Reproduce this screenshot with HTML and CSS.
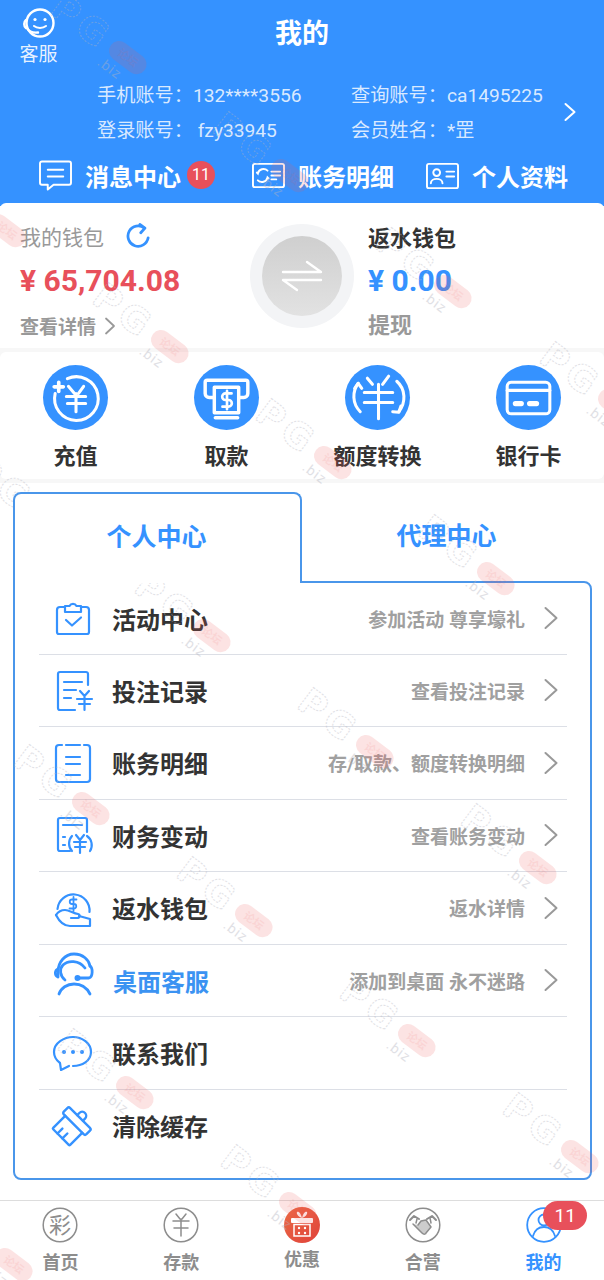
FILE: index.html
```html
<!DOCTYPE html>
<html lang="zh-CN">
<head>
<meta charset="utf-8">
<title>我的</title>
<link rel="stylesheet" href="styles.css">
</head>
<body>
<div class="page">
  <header class="header">
    <div class="top">
      <div class="service">
        <svg class="service-icon" viewBox="0 0 34 32" fill="none" stroke="#fff" stroke-width="2.4" stroke-linecap="round">
          <circle cx="18" cy="15" r="13.5"/>
          <circle cx="13" cy="11.5" r="1.6" fill="#fff" stroke="none"/>
          <circle cx="23" cy="11.5" r="1.6" fill="#fff" stroke="none"/>
          <path d="M4 12c-2.400 2-2.400 6 0 8"/>
          <path d="M5 20c2 4 6 5 11 4.500"/>
          <path d="M12 18c3 2.500 9 2.500 12 0" stroke-width="2"/>
        </svg>
        <span class="service-label">客服</span>
      </div>
      <h1 class="title">我的</h1>
    </div>
    <div class="account">
      <div class="account-grid">
        <span>手机账号：132****3556</span>
        <span>查询账号：ca1495225</span>
        <span>登录账号： fzy33945</span>
        <span>会员姓名：*罡</span>
      </div>
      <svg class="account-arrow" viewBox="0 0 14 20" fill="none" stroke="#fff" stroke-width="2" stroke-linecap="round" stroke-linejoin="round"><path d="M2.500 2l9 8-9 8"/></svg>
    </div>
    <nav class="actions">
      <div class="action">
        <svg class="action-icon" viewBox="0 0 34 32" fill="none" stroke="#fff" stroke-width="2" stroke-linejoin="round" stroke-linecap="round">
          <path d="M3 1.500h28a2 2 0 0 1 2 2v20a2 2 0 0 1-2 2H15l-6 5v-5H3a2 2 0 0 1-2-2v-20a2 2 0 0 1 2-2z"/>
          <path d="M9 10h16M9 17h16"/>
        </svg>
        <span>消息中心</span>
        <span class="msg-badge">11</span>
      </div>
      <div class="action">
        <svg class="action-icon" viewBox="0 0 34 28" fill="none" stroke="#fff" stroke-width="2" stroke-linecap="round">
          <rect x="1" y="2" width="32" height="24" rx="2"/>
          <path d="M16 9a6 6 0 0 0-10 3l-1-1M6 19a6 6 0 0 0 10-3l1 1"/>
          <path d="M20 10h9M20 14h9M20 18h5"/>
        </svg>
        <span>账务明细</span>
      </div>
      <div class="action">
        <svg class="action-icon" viewBox="0 0 34 28" fill="none" stroke="#fff" stroke-width="2" stroke-linecap="round">
          <rect x="1" y="2" width="32" height="25" rx="2"/>
          <circle cx="11" cy="11" r="3.500"/>
          <path d="M5 22c0-6 12-6 12 0M21 10h8M21 15h8"/>
        </svg>
        <span>个人资料</span>
      </div>
    </nav>
  </header>

  <section class="wallet">
    <div class="wallet-col wallet-main">
      <div class="wallet-name">我的钱包
        <svg class="refresh" viewBox="0 0 26 28" fill="none" stroke="#3592ff" stroke-width="3" stroke-linecap="round" stroke-linejoin="round">
          <path d="M20 5.500A11 11 0 1 0 24 16"/><path d="M15 1.500l5.500 4-4.500 5"/>
        </svg>
      </div>
      <div class="amount amount-red">¥ 65,704.08</div>
      <div class="wallet-link">查看详情
        <svg class="link-arrow" viewBox="0 0 12 18" fill="none" stroke="#999" stroke-width="1.800" stroke-linecap="round" stroke-linejoin="round"><path d="M2 1.500l8 7.500-8 7.500"/></svg>
      </div>
    </div>
    <div class="swap">
      <div class="swap-inner">
        <svg viewBox="0 0 42 34" fill="none" stroke="#fff" stroke-width="2.400" stroke-linecap="round" stroke-linejoin="round">
          <path d="M2 13h38L26 3"/><path d="M40 21H2l14 10"/>
        </svg>
      </div>
    </div>
    <div class="wallet-col wallet-back">
      <div class="wallet-name wallet-name-dark">返水钱包</div>
      <div class="amount amount-blue">¥ 0.00</div>
      <div class="wallet-withdraw">提现</div>
    </div>
  </section>

  <section class="shortcuts">
    <div class="shortcut">
      <div class="shortcut-icon">
        <svg viewBox="0 0 64 64" fill="none" stroke="#fff" stroke-width="3" stroke-linecap="round" stroke-linejoin="round">
          <path d="M12 28A21.500 21.500 0 1 0 24 13.500"/>
          <path d="M15.500 17v9M11 21.500h9" stroke-width="3.600"/>
          <path d="M25 21l6 7M40 21l-5 7M23 31h19M24 38h18M32.500 28v18"/>
        </svg>
      </div>
      <span>充值</span>
    </div>
    <div class="shortcut">
      <div class="shortcut-icon">
        <svg viewBox="0 0 64 64" fill="none" stroke="#fff" stroke-width="3.400" stroke-linecap="round" stroke-linejoin="round">
          <path d="M19 32h-4a4 4 0 0 1-4-4V17a2 2 0 0 1 2-2h38a2 2 0 0 1 2 2v11a4 4 0 0 1-4 4h-4"/>
          <path d="M20 22h24v25H20z"/>
          <path d="M37 28h-6a2.500 2.500 0 0 0 0 6.500h3a2.500 2.500 0 0 1 0 6.500h-6M32.500 25.500v18" stroke-width="2.600"/>
          <path d="M21 52h22"/>
        </svg>
      </div>
      <span>取款</span>
    </div>
    <div class="shortcut">
      <div class="shortcut-icon">
        <svg viewBox="0 0 64 64" fill="none" stroke="#fff" stroke-width="3" stroke-linecap="round" stroke-linejoin="round">
          <path d="M13 18c-6 8-6 20 2 28"/><path d="M9.500 23l3.500-5 3.500 5"/>
          <path d="M51 16c9 8 9 21 2 30"/><path d="M47 46l6 0.500 2-6"/>
          <path d="M22 13l5 6M43 11l-6 8M19 27h28M19 37h28M33 19v34"/>
        </svg>
      </div>
      <span>额度转换</span>
    </div>
    <div class="shortcut">
      <div class="shortcut-icon">
        <svg viewBox="0 0 64 64" fill="none" stroke="#fff" stroke-width="3" stroke-linecap="round" stroke-linejoin="round">
          <rect x="11" y="17" width="42" height="31" rx="4"/>
          <path d="M11 25h42"/>
          <path d="M19 38h6M33 38h7" stroke-width="5"/>
        </svg>
      </div>
      <span>银行卡</span>
    </div>
  </section>

  <section class="center">
    <div class="tabs">
      <div class="tab tab-on">个人中心</div>
      <div class="tab">代理中心</div>
    </div>
    <div class="panel">
      <div class="row">
        <svg class="row-icon" viewBox="0 0 40 40" fill="none" stroke="#3592ff" stroke-width="2.200" stroke-linecap="round" stroke-linejoin="round">
          <path d="M12 9H7a3 3 0 0 0-3 3v22a2 2 0 0 0 2 2h28a2 2 0 0 0 2-2V12a3 3 0 0 0-3-3h-5"/>
          <path d="M12 14V8h4.500a4 4 0 0 1 7 0H28v6z"/>
          <path d="M13 22l6 5.500 9-8"/>
        </svg>
        <span class="row-name">活动中心</span>
        <span class="row-hint">参加活动 尊享壕礼</span>
        <svg class="row-arrow" viewBox="0 0 16 24" fill="none" stroke="#999" stroke-width="2" stroke-linecap="round" stroke-linejoin="round"><path d="M2.500 2l11 10-11 10"/></svg>
      </div>
      <div class="row">
        <svg class="row-icon" viewBox="0 0 40 40" fill="none" stroke="#3592ff" stroke-width="2.200" stroke-linecap="round" stroke-linejoin="round">
          <path d="M35 15V4a2 2 0 0 0-2-2H7a2 2 0 0 0-2 2v34a2 2 0 0 0 2 2h15"/>
          <path d="M11 12h18M11 20h12M11 28h7"/>
          <path d="M27 21l4.500 5 4.500-5M24 29h15M26 34h11M31.500 26v14"/>
        </svg>
        <span class="row-name">投注记录</span>
        <span class="row-hint">查看投注记录</span>
        <svg class="row-arrow" viewBox="0 0 16 24" fill="none" stroke="#999" stroke-width="2" stroke-linecap="round" stroke-linejoin="round"><path d="M2.500 2l11 10-11 10"/></svg>
      </div>
      <div class="row">
        <svg class="row-icon" viewBox="0 0 40 40" fill="none" stroke="#3592ff" stroke-width="2.200" stroke-linecap="round" stroke-linejoin="round">
          <path d="M9 2H6a3 3 0 0 0-3 3v31a3 3 0 0 0 3 3h28a3 3 0 0 0 3-3V5a3 3 0 0 0-3-3h-3"/>
          <path d="M13 2h14M13 14h14M13 21h14M13 32h14"/>
        </svg>
        <span class="row-name">账务明细</span>
        <span class="row-hint">存/取款、额度转换明细</span>
        <svg class="row-arrow" viewBox="0 0 16 24" fill="none" stroke="#999" stroke-width="2" stroke-linecap="round" stroke-linejoin="round"><path d="M2.500 2l11 10-11 10"/></svg>
      </div>
      <div class="row">
        <svg class="row-icon" viewBox="0 0 40 40" fill="none" stroke="#3592ff" stroke-width="2.200" stroke-linecap="round" stroke-linejoin="round">
          <path d="M34 17V5a2 2 0 0 0-2-2H7a2 2 0 0 0-2 2v29a2 2 0 0 0 2 2h10"/>
          <path d="M10 10h19M10 22h2M10 30h2"/>
          <path d="M19 21a11 11 0 0 0 0 15M34 21a11 11 0 0 1 3 15"/>
          <path d="M23 20l4 5 4-5M21 27h12M22 32h10M27 25v13"/>
        </svg>
        <span class="row-name">财务变动</span>
        <span class="row-hint">查看账务变动</span>
        <svg class="row-arrow" viewBox="0 0 16 24" fill="none" stroke="#999" stroke-width="2" stroke-linecap="round" stroke-linejoin="round"><path d="M2.500 2l11 10-11 10"/></svg>
      </div>
      <div class="row">
        <svg class="row-icon" viewBox="0 0 40 40" fill="none" stroke="#3592ff" stroke-width="2.200" stroke-linecap="round" stroke-linejoin="round">
          <path d="M4.500 21A16 16 0 1 1 36.500 24"/>
          <path d="M23.500 11.500h-4.500a2.200 2.200 0 0 0 0 4.500h2a2.200 2.200 0 0 1 0 4.500h-4.500M20.500 9v14" stroke-width="1.800"/>
          <path d="M3 27c2-3 5-5 9-5 4 0 8 3 13 4 2.500.5 2 4-1 4h-6"/>
          <path d="M3 27c3 6 7 11 14 11h20v-7l-11-3"/>
        </svg>
        <span class="row-name">返水钱包</span>
        <span class="row-hint">返水详情</span>
        <svg class="row-arrow" viewBox="0 0 16 24" fill="none" stroke="#999" stroke-width="2" stroke-linecap="round" stroke-linejoin="round"><path d="M2.500 2l11 10-11 10"/></svg>
      </div>
      <div class="row">
        <svg class="row-icon" viewBox="0 0 40 40" fill="none" stroke="#3592ff" stroke-width="2.800" stroke-linecap="round" stroke-linejoin="round">
          <path d="M5 16v-4C5 2 12-6 21-6s15 6 16 12"/>
          <path d="M5 9c-3 1-4 6 0 8"/>
          <path d="M37 6c3 2 3 11-1 12H26"/>
          <path d="M12 20C7 16 6 9 10 5c5-5 16-5 22 3"/>
          <circle cx="24.500" cy="18" r="1.600" fill="#3592ff"/>
          <path d="M6 34c2-6 8-10 15-10s13 4 16 10"/>
        </svg>
        <span class="row-name row-name-blue">桌面客服</span>
        <span class="row-hint">添加到桌面 永不迷路</span>
        <svg class="row-arrow" viewBox="0 0 16 24" fill="none" stroke="#999" stroke-width="2" stroke-linecap="round" stroke-linejoin="round"><path d="M2.500 2l11 10-11 10"/></svg>
      </div>
      <div class="row">
        <svg class="row-icon" viewBox="0 0 40 40" fill="none" stroke="#3592ff" stroke-width="2.200" stroke-linecap="round" stroke-linejoin="round">
          <path d="M20 33c9 0 18-5 18-14C38 10 29 4 20 4S1 10 1 19c0 5 2 8 6 11l1 7 8-4"/>
          <circle cx="11" cy="19" r="2" fill="#3592ff" stroke="none"/>
          <circle cx="20" cy="19" r="2" fill="#3592ff" stroke="none"/>
          <circle cx="29" cy="19" r="2" fill="#3592ff" stroke="none"/>
        </svg>
        <span class="row-name">联系我们</span>
      </div>
      <div class="row row-last">
        <svg class="row-icon" viewBox="0 0 40 40" fill="none" stroke="#3592ff" stroke-width="2.400" stroke-linecap="round" stroke-linejoin="round">
          <g transform="rotate(45 20 19)">
            <path d="M16 9V6a4 4 0 0 1 8 0v3"/>
            <rect x="4" y="9" width="32" height="9" rx="2"/>
            <path d="M8 18v17a1 1 0 0 0 1 1h6v-7"/>
            <path d="M15 36h7v-7"/>
            <path d="M22 36h9a1 1 0 0 0 1-1V18"/>
          </g>
        </svg>
        <span class="row-name">清除缓存</span>
      </div>
    </div>
  </section>

  <footer class="tabbar">
    <div class="tabbar-item">
      <svg class="tabbar-icon" viewBox="0 0 36 36">
        <circle cx="18" cy="18" r="16.800" fill="none" stroke="#8d8d8d" stroke-width="1.500"/>
        <text class="glyph" x="18" y="26" text-anchor="middle">彩</text>
      </svg>
      <span>首页</span>
    </div>
    <div class="tabbar-item">
      <svg class="tabbar-icon" viewBox="0 0 36 36" fill="none" stroke="#8d8d8d" stroke-width="1.500" stroke-linecap="round" stroke-linejoin="round">
        <circle cx="18" cy="18" r="16.800"/>
        <path d="M13 7l4 5M23 7l-4 5M10 14h16M11 21h14M18 12v17"/>
      </svg>
      <span>存款</span>
    </div>
    <div class="tabbar-item tabbar-raised">
      <svg class="tabbar-icon" viewBox="0 0 36 36">
        <defs>
          <linearGradient id="giftFill" x1="0" y1="0" x2="1" y2="1"><stop offset="0" stop-color="#ea6b45"/><stop offset="1" stop-color="#e0413a"/></linearGradient>
        </defs>
        <circle cx="18" cy="18" r="18" fill="url(#giftFill)"/>
        <path d="M18 11c-3-1-6-4-5-6 2-1 4 2 5 6zM18 11c3-1 6-4 5-6-2-1-4 2-5 6z" fill="#fff"/>
        <rect x="7" y="11" width="22" height="5" rx="1" fill="#fff"/>
        <path d="M10 17.500h16V29H10z" fill="none" stroke="#fff" stroke-width="1.500"/>
        <circle cx="15" cy="21" r="1.200" fill="#fff"/><circle cx="21" cy="21" r="1.200" fill="#fff"/><circle cx="15" cy="26" r="1.200" fill="#fff"/><circle cx="21" cy="26" r="1.200" fill="#fff"/>
      </svg>
      <span>优惠</span>
    </div>
    <div class="tabbar-item">
      <svg class="tabbar-icon" viewBox="0 0 36 36" fill="none" stroke="#8d8d8d" stroke-width="1.500" stroke-linecap="round" stroke-linejoin="round">
        <circle cx="18" cy="18" r="16.800"/>
        <path d="M5 13l4-4 5 3M31 13l-4-4-5 3" stroke-width="2"/>
        <path d="M8 17l9 9c2 2 4 1 4 0l5-6-5-7-5 1-3 4" fill="#8d8d8d" fill-opacity=".45"/>
        <path d="M12 12l-1 4M25 11l1 5"/>
      </svg>
      <span>合营</span>
    </div>
    <div class="tabbar-item tabbar-on">
      <svg class="tabbar-icon" viewBox="0 0 36 36" fill="none" stroke="#3592ff" stroke-width="1.800" stroke-linecap="round" stroke-linejoin="round">
        <circle cx="18" cy="18" r="16.800"/>
        <circle cx="18" cy="13" r="5.500"/>
        <path d="M7 29c2-7 6-9 11-9s9 2 11 9"/>
      </svg>
      <span>我的</span>
      <span class="tabbar-badge">11</span>
    </div>
  </footer>

  <svg class="stamps" viewBox="0 0 604 1280" width="604" height="1280">
    <defs>
      <g id="stamp" transform="rotate(37)">
        <text class="stamp-letters" x="-24" y="12" text-anchor="end">PG</text>
        <rect class="stamp-pill" x="-20" y="-10" width="42" height="20" rx="10"/>
        <text class="stamp-pill-text" x="1" y="4" text-anchor="middle">论坛</text>
        <text class="stamp-biz" x="-7" y="24" text-anchor="middle">.biz</text>
      </g>
    </defs>
    <use href="#stamp" transform="translate(127 57)"/>
    <use href="#stamp" transform="translate(289 175)"/>
    <use href="#stamp" transform="translate(6 230)"/>
    <use href="#stamp" transform="translate(169 346)"/>
    <use href="#stamp" transform="translate(452 291)"/>
    <use href="#stamp" transform="translate(616 405)"/>
    <use href="#stamp" transform="translate(332 462)"/>
    <use href="#stamp" transform="translate(495 578)"/>
    <use href="#stamp" transform="translate(48 519)"/>
    <use href="#stamp" transform="translate(211 635)"/>
    <use href="#stamp" transform="translate(374 751)"/>
    <use href="#stamp" transform="translate(537 867)"/>
    <use href="#stamp" transform="translate(90 808)"/>
    <use href="#stamp" transform="translate(253 920)"/>
    <use href="#stamp" transform="translate(416 1040)"/>
    <use href="#stamp" transform="translate(579 1156)"/>
    <use href="#stamp" transform="translate(134 1092)"/>
    <use href="#stamp" transform="translate(297 1208)"/>
    <use href="#stamp" transform="translate(13 1264)"/>
  </svg>
</div>
</body>
</html>
```

FILE: styles.css
```css
* {
  box-sizing: border-box;
}

html,
body {
  margin: 0;
  padding: 0;
}

body {
  background: #fff;
  color: #333;
  font-family: "Roboto", "Noto Sans CJK SC", sans-serif;
}

.page {
  position: relative;
  width: 604px;
  height: 1280px;
  overflow: hidden;
  background: #f7f7f7;
  display: flex;
  flex-direction: column;
}

/* Blue account header */
.header {
  height: 206px;
  padding-bottom: 11px;
  background: #3592ff;
  color: #fff;
  flex: none;
}

.top {
  height: 76px;
  display: grid;
  grid-template-columns: 77px 1fr 77px;
}

.service {
  padding-top: 8px;
  display: flex;
  flex-direction: column;
  align-items: center;
}

.service-icon {
  width: 34px;
  height: 32px;
}

.service-label {
  margin-top: 2px;
  font-size: 19px;
  line-height: 26px;
  color: rgba(255, 255, 255, .9);
}

.title {
  margin: 15px 0 0;
  font-size: 27px;
  line-height: 38px;
  font-weight: 700;
  text-align: center;
}

.account {
  height: 71px;
  padding: 0 27px 0 97px;
  display: flex;
  align-items: center;
}

.account-grid {
  flex: 1;
  display: grid;
  grid-template-columns: 254px 1fr;
  grid-auto-rows: 35px;
  align-items: center;
  font-size: 19.200px;
  color: rgba(255, 255, 255, .82);
  white-space: nowrap;
}

.account-arrow {
  width: 14px;
  height: 20px;
}

.actions {
  height: 48px;
  padding: 8px 0 0 39px;
  display: grid;
  grid-template-columns: 213px 174px 1fr;
  align-items: center;
  font-size: 24px;
  font-weight: 700;
  white-space: nowrap;
}

.action {
  display: flex;
  align-items: center;
  gap: 13px;
}

.action-icon {
  width: 33px;
  height: 31px;
  flex: none;
}

.msg-badge {
  width: 28px;
  height: 28px;
  margin-left: -7px;
  border-radius: 50%;
  background: #e8505b;
  font-size: 16px;
  font-weight: 400;
  line-height: 28px;
  text-align: center;
}

/* Wallet card */
.wallet {
  height: 145px;
  margin-top: -3px;
  border-radius: 6px 6px 0 0;
  background: #fff;
  display: grid;
  grid-template-columns: 250px 104px 1fr;
  flex: none;
}

.wallet-col {
  display: flex;
  flex-direction: column;
}

.wallet-main {
  padding-left: 20px;
}

.wallet-back {
  padding-left: 14px;
}

.wallet-name {
  height: 56px;
  padding-top: 9px;
  display: flex;
  align-items: center;
  gap: 22px;
  font-size: 21px;
  color: #999;
}

.wallet-name-dark {
  font-size: 22px;
  font-weight: 700;
  color: #333;
}

.refresh {
  width: 24px;
  height: 26px;
}

.amount {
  height: 45px;
  font-size: 30px;
  font-weight: 700;
  line-height: 44px;
  white-space: nowrap;
}

.amount-red {
  color: #e8505b;
}

.amount-blue {
  color: #3592ff;
}

.wallet-link {
  height: 43px;
  display: flex;
  align-items: center;
  gap: 8px;
  font-size: 19px;
  font-weight: 700;
  color: #999;
}

.link-arrow {
  width: 12px;
  height: 18px;
}

.wallet-withdraw {
  height: 44px;
  font-size: 22px;
  font-weight: 700;
  line-height: 44px;
  color: #999;
}

.swap {
  width: 104px;
  height: 104px;
  margin-top: 21px;
  border-radius: 50%;
  background: #f3f4f6;
  display: flex;
  align-items: center;
  justify-content: center;
}

.swap-inner {
  width: 80px;
  height: 80px;
  border-radius: 50%;
  background: linear-gradient(180deg, #cfcfcf, #e2e2e2);
  display: flex;
  align-items: center;
  justify-content: center;
}

.swap-inner svg {
  width: 42px;
  height: 34px;
}

/* Quick actions */
.shortcuts {
  height: 127px;
  margin-top: 4px;
  padding-top: 13px;
  border-radius: 6px;
  background: #fff;
  display: grid;
  grid-template-columns: repeat(4, 1fr);
  flex: none;
}

.shortcut {
  display: flex;
  flex-direction: column;
  align-items: center;
  font-size: 22px;
  font-weight: 700;
  color: #333;
}

.shortcut-icon {
  width: 65px;
  height: 65px;
  border-radius: 50%;
  background: #3592ff;
}

.shortcut-icon svg {
  display: block;
  width: 65px;
  height: 65px;
}

.shortcut span {
  margin-top: 11px;
  line-height: 32px;
}

/* Tabbed menu */
.center {
  flex: 1;
  margin-top: 4px;
  padding: 9px 12px 0 13px;
  background: #fff;
}

.tabs {
  height: 89px;
  display: flex;
}

.tab {
  width: 289px;
  height: 89px;
  padding-top: 27px;
  font-size: 25px;
  font-weight: 700;
  line-height: 36px;
  text-align: center;
  color: #3592ff;
}

.tab-on {
  position: relative;
  z-index: 1;
  height: 91px;
  padding: 26px 2px 0 0;
  border: 2px solid #4a96ea;
  border-bottom: none;
  border-radius: 8px 8px 0 0;
  background: #fff;
}

.panel {
  height: 599px;
  padding: 0 23px 0 24px;
  border: 2px solid #4a96ea;
  border-radius: 0 8px 8px 8px;
  background: #fff;
}

.row {
  height: 72.500px;
  padding-left: 14px;
  border-bottom: 1px solid #dcdfe6;
  display: flex;
  align-items: center;
  white-space: nowrap;
}

.row:first-child {
  height: 71.500px;
}

.row-last {
  border-bottom: none;
}

.row-icon {
  width: 40px;
  height: 40px;
  flex: none;
  overflow: visible;
}

.row-name {
  margin-left: 19px;
  font-size: 24px;
  font-weight: 700;
  color: #333;
}

.row-name-blue {
  margin-left: 20px;
  color: #3b93f2;
}

.row-hint {
  margin-left: auto;
  font-size: 19px;
  font-weight: 700;
  color: #a0a0a0;
}

.row-arrow {
  width: 16px;
  height: 24px;
  margin: 0 8px 0 18px;
  flex: none;
}

/* Bottom navigation */
.tabbar {
  position: absolute;
  left: 0;
  right: 0;
  bottom: 0;
  height: 80px;
  border-top: 1px solid #ddd;
  background: #fff;
  display: grid;
  grid-template-columns: repeat(5, 1fr);
}

.tabbar-item {
  position: relative;
  padding-top: 6px;
  display: flex;
  flex-direction: column;
  align-items: center;
  font-size: 18px;
  font-weight: 700;
  color: #8d8d8d;
}

.tabbar-icon {
  width: 36px;
  height: 36px;
}

.tabbar-item span {
  margin-top: 7px;
  line-height: 26px;
}

.tabbar-raised span {
  margin-top: 4px;
}

.glyph {
  font: 400 22px "Noto Sans CJK SC", sans-serif;
  fill: #8d8d8d;
}

.tabbar-on {
  color: #3592ff;
}

.tabbar-item .tabbar-badge {
  position: absolute;
  top: 0;
  left: 82px;
  margin: 0;
  transform: translateX(-50%);
  width: 44px;
  height: 29px;
  border-radius: 14.500px;
  background: #e8505b;
  font-size: 19px;
  font-weight: 400;
  line-height: 29px;
  text-align: center;
  color: #fff;
}

/* Faint stamp repeated over the whole page */
.stamps {
  position: absolute;
  left: 0;
  top: 0;
  pointer-events: none;
}

.stamp-letters {
  font: 700 36px "DejaVu Sans", sans-serif;
  letter-spacing: 5px;
  fill: none;
  stroke: #b4b4c0;
  stroke-width: 1;
  stroke-dasharray: 2 1.500;
  opacity: .4;
}

.stamp-pill {
  fill: #ef5b5b;
  opacity: .17;
}

.stamp-pill-text {
  font: 700 11px "Noto Sans CJK SC", sans-serif;
  fill: #ef5b5b;
  opacity: .1;
}

.stamp-biz {
  font: 400 14px "Roboto", sans-serif;
  letter-spacing: 1px;
  fill: #b4b4c0;
  opacity: .4;
}
```
